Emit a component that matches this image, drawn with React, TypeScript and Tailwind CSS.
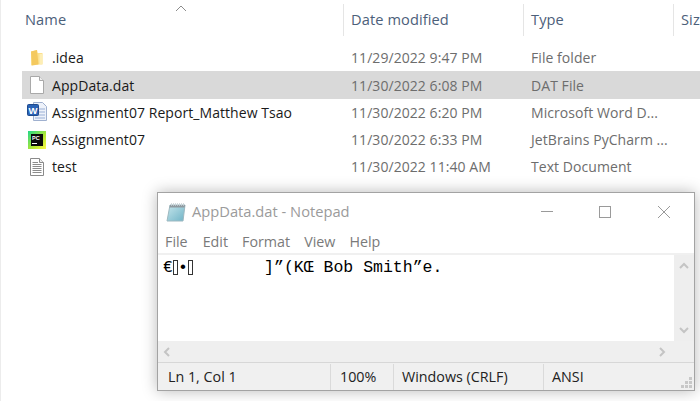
const F = { fontFamily: '"Open Sans", "Noto Sans", sans-serif' };

function FolderIcon() {
  return (
    <svg width="16" height="18" viewBox="0 0 16 18">
      <path d="M2 2.5 L8 1 L8.5 4 L13.5 4 L13.5 15.5 L6 15.5 L2 16.5 Z" fill="#fbe08e" />
      <path d="M2 2.5 L8 1 L9.5 15.5 L3 16.5 Z" fill="#f4c95f" />
      <path d="M10.5 5 L13.5 5 L13.5 15 L10.5 15 Z" fill="#fdeeb5" />
    </svg>
  );
}
function BlankIcon() {
  return (
    <svg width="16" height="20" viewBox="0 0 16 20">
      <path d="M1.5 1.5 H10.5 L14.5 5.5 V18.5 H1.5 Z" fill="#fff" stroke="#a9a9a9" />
      <path d="M10.5 1.5 V5.5 H14.5" fill="#eee" stroke="#a9a9a9" />
    </svg>
  );
}
function WordIcon() {
  return (
    <svg width="21" height="21" viewBox="0 0 21 21">
      <path d="M6.5 0.5 H15.5 L19.5 4.5 V18.5 H6.5 Z" fill="#eef2fa" stroke="#9fb0cf" />
      <path d="M8 7 H18 M8 10 H18 M8 13 H18 M8 16 H18" stroke="#9ab0d6" />
      <rect x="0.5" y="2.5" width="11" height="11" rx="1" fill="#2a62b5" stroke="#1f4a8c" />
      <text x="6" y="11.5" textAnchor="middle" fontSize="9.5" fontWeight="700" fill="#fff" fontFamily="Liberation Sans">W</text>
    </svg>
  );
}
function PyCharmIcon() {
  return (
    <svg width="18" height="18" viewBox="0 0 18 18">
      <defs>
        <linearGradient id="pc" x1="0" y1="0" x2="1" y2="1">
          <stop offset="0" stopColor="#21d789" />
          <stop offset="0.6" stopColor="#b4e832" />
          <stop offset="1" stopColor="#fcf84a" />
        </linearGradient>
      </defs>
      <rect width="18" height="18" fill="url(#pc)" />
      <rect x="3" y="3" width="12" height="12" fill="#0b0b0b" />
      <text x="4" y="9" fontSize="5.5" fontWeight="700" fill="#fff" fontFamily="Liberation Sans">PC</text>
      <rect x="4" y="12" width="5" height="1" fill="#fff" />
    </svg>
  );
}
function TextIcon() {
  return (
    <svg width="16" height="20" viewBox="0 0 16 20">
      <path d="M1.5 1.5 H10.5 L14.5 5.5 V18.5 H1.5 Z" fill="#fff" stroke="#8a8a8a" />
      <path d="M10.5 1.5 V5.5 H14.5" fill="#eee" stroke="#8a8a8a" />
      <path d="M3.5 5.5 H9 M3.5 7.5 H12.5 M3.5 9.5 H12.5 M3.5 11.5 H12.5 M3.5 13.5 H12.5 M3.5 15.5 H12.5" stroke="#8c8c8c" />
    </svg>
  );
}
function NotepadIcon() {
  return (
    <svg width="20" height="20" viewBox="0 0 20 20">
      <defs>
        <linearGradient id="np" x1="0" y1="0" x2="1" y2="1">
          <stop offset="0" stopColor="#c6e6ec" />
          <stop offset="1" stopColor="#6fb3c6" />
        </linearGradient>
      </defs>
      <path d="M4 3 H19 L17 19 H1 Z" fill="url(#np)" stroke="#9db8c0" />
      <path d="M4 3 H19 L18.6 5.5 H3.6 Z" fill="#8f9aa0" />
      <path d="M5.5 1 V4 M7.5 1 V4 M9.5 1 V4 M11.5 1 V4 M13.5 1 V4 M15.5 1 V4 M17.5 1 V4" stroke="#c9d2d6" strokeWidth="0.8" />
    </svg>
  );
}

const rows = [
  { icon: <FolderIcon />, name: ".idea", date: "11/29/2022 9:47 PM", type: "File folder", h: "h-[27px]" },
  { icon: <BlankIcon />, name: "AppData.dat", date: "11/30/2022 6:08 PM", type: "DAT File", h: "h-[28px] bg-[#d9d9d9]" },
  { icon: <WordIcon />, name: "Assignment07 Report_Matthew Tsao", date: "11/30/2022 6:20 PM", type: "Microsoft Word D...", h: "h-[27px]" },
  { icon: <PyCharmIcon />, name: "Assignment07", date: "11/30/2022 6:33 PM", type: "JetBrains PyCharm ...", h: "h-[27px]" },
  { icon: <TextIcon />, name: "test", date: "11/30/2022 11:40 AM", type: "Text Document", h: "h-[27px]" },
];

function Box() {
  return <span className="inline-block w-[5px] h-[15px] border border-[#333] align-[-3px]" />;
}

function Arrow({ d }: { d: string }) {
  return (
    <svg width="10" height="10" viewBox="0 0 10 10">
      <path d={d} fill="none" stroke="#c4c4c4" strokeWidth="2" />
    </svg>
  );
}

export default function App() {
  return (
    <div className="relative w-[700px] h-[401px] overflow-hidden bg-white border-l border-[#ececec]" style={F}>
      <div className="relative flex h-[32px] mt-[4px] pl-[24px] text-[14.6px] tracking-[0.1px] text-[#4c607a] items-center">
        <div className="w-[319px] shrink-0 h-full flex items-center border-r border-[#e5e5e5]">Name</div>
        <div className="w-[180px] shrink-0 h-full flex items-center pl-[7px] border-r border-[#e5e5e5]">Date modified</div>
        <div className="w-[150px] shrink-0 h-full flex items-center pl-[7px] border-r border-[#e5e5e5]">Type</div>
        <div className="pl-[7px] shrink-0">Size</div>
        <svg width="12" height="7" viewBox="0 0 12 7" className="absolute left-[174px] top-[1px]">
          <path d="M1 6 L6 1 L11 6" fill="none" stroke="#8c8c8c" />
        </svg>
      </div>
      <div className="mt-[8px] ml-[21px]">
        {rows.map((r) => (
          <div key={r.name} className={`flex items-center text-[14px] tracking-[0.06px] ${r.h}`}>
            <div className="w-[30px] flex justify-center shrink-0">{r.icon}</div>
            <div className="w-[299px] shrink-0 text-[#1a1a1a] whitespace-nowrap">{r.name}</div>
            <div className="w-[180px] shrink-0 text-[#6d6d6d]">{r.date}</div>
            <div className="text-[#6d6d6d] whitespace-nowrap">{r.type}</div>
          </div>
        ))}
      </div>

      <div className="absolute left-[156px] top-[192px] w-[538px] h-[199px] flex flex-col bg-white border border-[#a3a3a3] shadow-[0_0_14px_rgba(0,0,0,0.28)]">
        <div className="flex items-center h-[37px] shrink-0">
          <div className="ml-[8px] mr-[6px] flex"><NotepadIcon /></div>
          <div className="text-[14.7px] text-[#9b9b9b] whitespace-nowrap">AppData.dat - Notepad</div>
          <div className="ml-auto flex items-center mr-[24px]">
            <div className="w-[12px] h-px bg-[#9a9a9a]" />
            <div className="ml-[46px] w-[12px] h-[12px] border border-[#9a9a9a]" />
            <svg width="12" height="12" viewBox="0 0 12 12" className="ml-[47px]">
              <path d="M0 0 L12 12 M12 0 L0 12" stroke="#9a9a9a" />
            </svg>
          </div>
        </div>
        <div className="flex items-center h-[23px] shrink-0 pl-[7px] gap-[14px] text-[14.3px] text-[#7a7a7a]">
          <span>File</span>
          <span className="ml-[1px]">Edit</span>
          <span>Format</span>
          <span>View</span>
          <span>Help</span>
        </div>
        <div className="h-[2px] bg-[#f0f0f0] shrink-0" />
        <div className="flex flex-1 min-h-0">
          <div className="flex-1 pl-[5px] pt-[3px] text-[16.5px] leading-[20px] text-black whitespace-pre" style={{ fontFamily: '"Liberation Mono", monospace' }}>
            <span>€</span><Box /><span>•</span><Box /><span className="ml-[2px]">       ]”(KŒ Bob Smith”e.</span>
          </div>
          <div className="w-[20px] bg-[#eeeeee] flex flex-col items-center justify-between py-[6px]">
            <Arrow d="M1 7 L5 3 L9 7" />
            <Arrow d="M1 3 L5 7 L9 3" />
          </div>
        </div>
        <div className="h-[21px] shrink-0 bg-[#efefef] flex items-center justify-between pl-[4px] pr-[27px]">
          <Arrow d="M7 1 L3 5 L7 9" />
          <Arrow d="M3 1 L7 5 L3 9" />
        </div>
        <div className="relative h-[28px] shrink-0 bg-[#f0f0f0] border-t border-[#d7d7d7] flex items-center text-[14.3px] text-[#222]">
          <div className="w-[173px] h-[26px] flex items-center pl-[10px] border-r border-[#dadada]">Ln 1, Col 1</div>
          <div className="w-[63px] h-[26px] flex items-center pl-[9px] border-r border-[#dadada]">100%</div>
          <div className="w-[150px] h-[26px] flex items-center pl-[8px] border-r border-[#dadada]">Windows (CRLF)</div>
          <div className="pl-[8px]">ANSI</div>
          <svg width="12" height="12" viewBox="0 0 12 12" className="absolute right-[1px] bottom-[1px]">
            <path d="M8 0h3v3H8zM4 4h3v3H4zM8 4h3v3H8zM0 8h3v3H0zM4 8h3v3H4zM8 8h3v3H8z" fill="#c8c8c8" />
          </svg>
        </div>
      </div>
    </div>
  );
}
